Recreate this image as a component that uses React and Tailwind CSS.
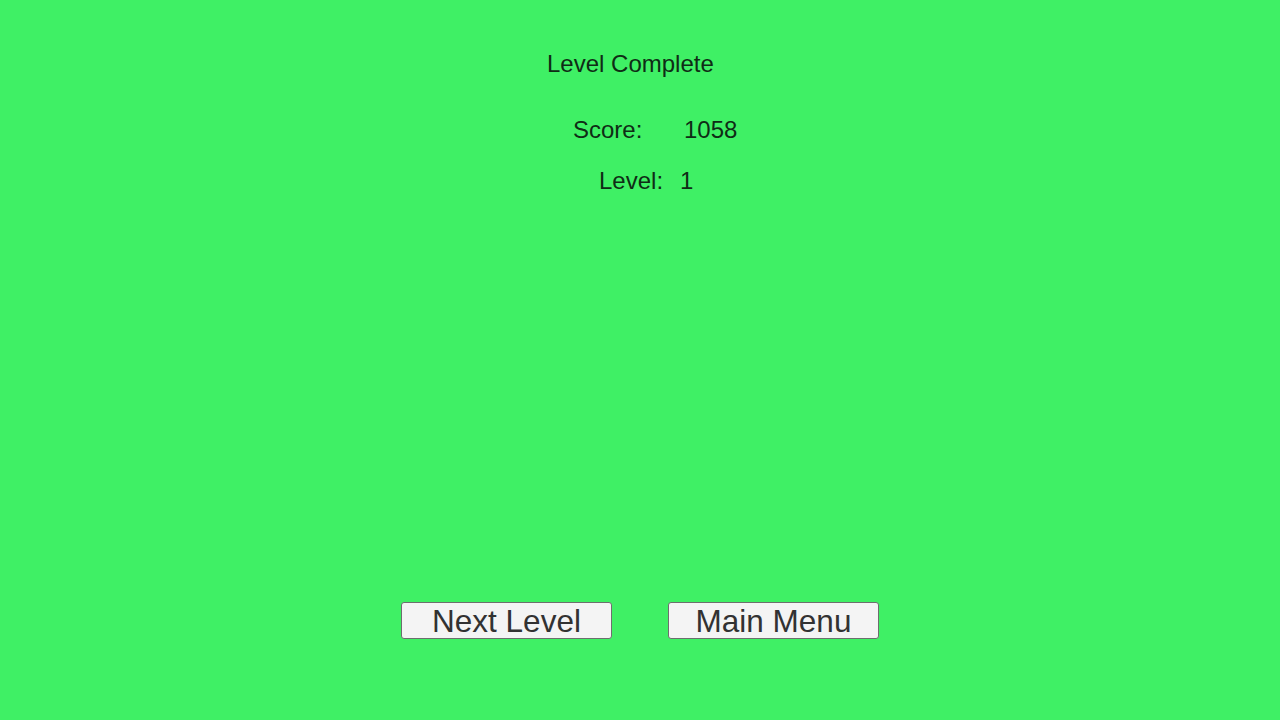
export default function App() {
  return (
    <div
      className="flex h-[720px] w-[1280px] flex-col bg-[#3ff065] text-[#0f2c15]"
      style={{ fontFamily: '"Liberation Sans", Arial, sans-serif' }}
    >
      <div className="pl-[547px] pt-[50px] text-[24px] leading-[28px]">Level Complete</div>

      <div className="mt-[38px] flex pl-[573px] text-[24px] leading-[28px]">
        <span className="w-[111px]">Score:</span>
        <span>1058</span>
      </div>

      <div className="mt-[23px] flex pl-[599px] text-[24px] leading-[28px]">
        <span className="w-[81px]">Level:</span>
        <span>1</span>
      </div>

      <div className="mt-[407px] flex gap-[57px] pl-[401px]">
        <button className="h-[37px] w-[211px] rounded-[3px] border border-[#6e6e6e] bg-[#f4f4f4] pt-px text-[31.5px] leading-[35px] text-[#323232]">
          Next Level
        </button>
        <button className="-ml-px h-[37px] w-[211px] rounded-[3px] border border-[#6e6e6e] bg-[#f4f4f4] pt-px text-[31.5px] leading-[35px] text-[#323232]">
          Main Menu
        </button>
      </div>
    </div>
  );
}
